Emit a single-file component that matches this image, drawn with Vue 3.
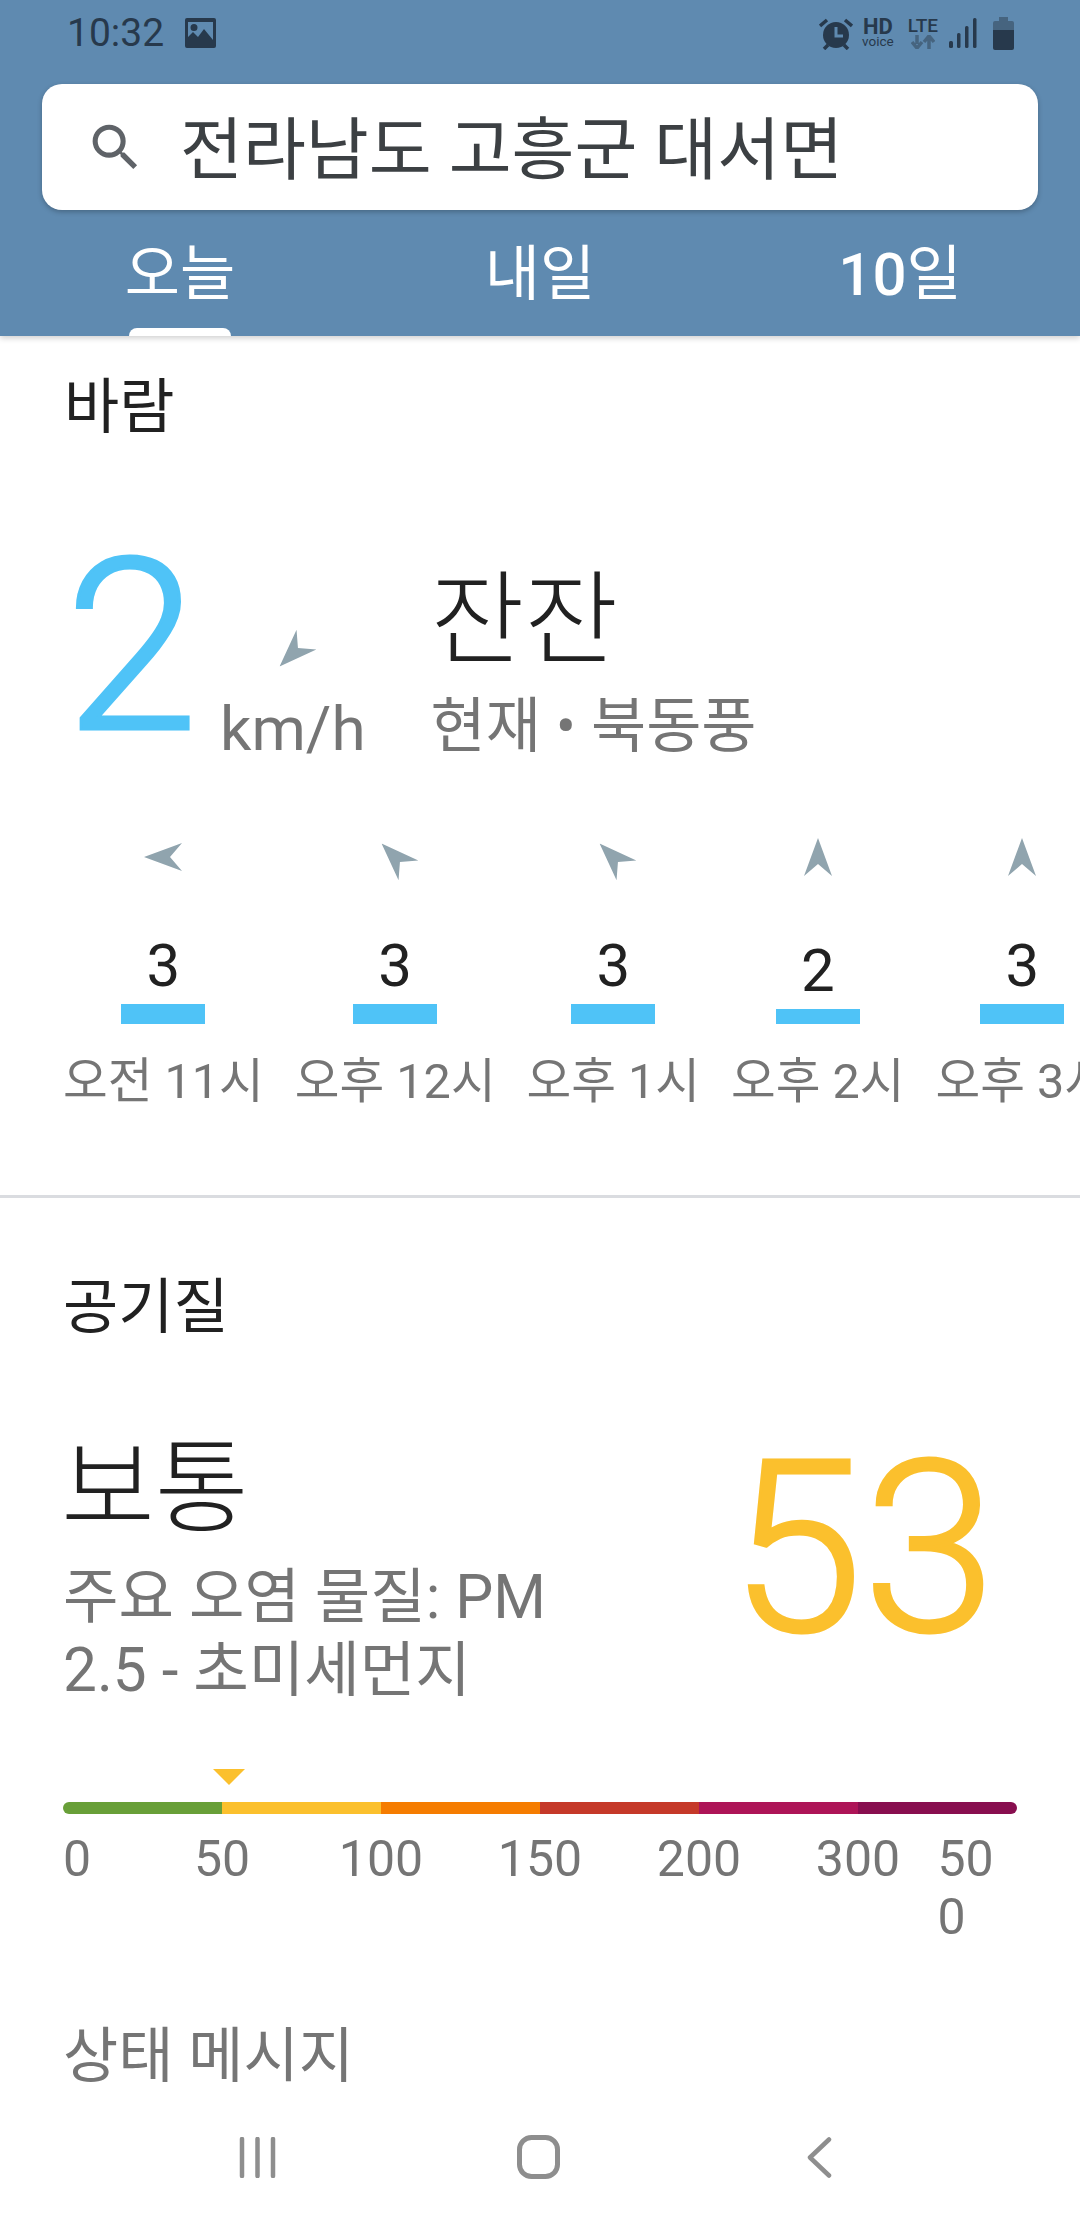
<script setup>
const hours = [
  { label: '오전 11시', value: 3, rot: -90 },
  { label: '오후 12시', value: 3, rot: -45 },
  { label: '오후 1시', value: 3, rot: -45 },
  { label: '오후 2시', value: 2, rot: 0 },
  { label: '오후 3시', value: 3, rot: 0 }
]

const segments = ['#689f38', '#fbc02d', '#f57c00', '#c53929', '#ad1457', '#880e4f']
const ticks = ['50', '100', '150', '200', '300']
const aqi = 53
const segWidth = 159

// marker sits over the bar, 0-50 is the first segment
const markerLeft = (aqi / 50) * segWidth - 19
</script>

<template>
  <div class="screen">
    <header class="top">
      <div class="status">
        <div class="status-left">
          <span class="time">10:32</span>
          <svg class="pic" width="31" height="30" viewBox="0 0 31 30">
            <path fill="#27394c" fill-rule="evenodd" d="M2 0h27a2 2 0 0 1 2 2v26a2 2 0 0 1-2 2H2a2 2 0 0 1-2-2V2a2 2 0 0 1 2-2zM3 4v15l5-5 5 5 6-8 9 11V4zM9 6a3.5 3.5 0 1 1 0 7 3.5 3.5 0 0 1 0-7z" />
          </svg>
        </div>
        <div class="status-right">
          <svg width="34" height="33" viewBox="0 0 34 33">
            <circle cx="17" cy="18" r="13" fill="#27394c" />
            <path d="M17 10v9h7" fill="none" stroke="#5f8ab0" stroke-width="3" />
            <path d="M1 9l7-6M33 9l-7-6M5 32l4-4M29 32l-4-4" stroke="#27394c" stroke-width="3.5" fill="none" />
          </svg>
          <div class="hd"><span class="hd-big">HD</span><span class="hd-small">voice</span></div>
          <div class="lte">
            <span class="lte-text">LTE</span>
            <svg width="24" height="14" viewBox="0 0 24 14">
              <path d="M6 0v9M1 7l5 6 5-6M18 14V4M13 7l5-6 5 6" fill="none" stroke="#46647f" stroke-width="3.5" />
            </svg>
          </div>
          <svg class="signal" width="28" height="30" viewBox="0 0 28 30">
            <rect x="0" y="23" width="4" height="7" rx="1.5" fill="#27394c" />
            <rect x="8" y="15" width="3.5" height="15" rx="1.5" fill="#27394c" />
            <rect x="16" y="8" width="3.5" height="22" rx="1.5" fill="#27394c" />
            <rect x="24" y="0" width="3.5" height="30" rx="1.5" fill="#27394c" />
          </svg>
          <svg class="battery" width="21" height="33" viewBox="0 0 21 33">
            <path d="M6 0h9v4h4a2 2 0 0 1 2 2v8H0V6a2 2 0 0 1 2-2h4z" fill="#46647f" />
            <path d="M0 13h21v18a2 2 0 0 1-2 2H2a2 2 0 0 1-2-2z" fill="#27394c" />
          </svg>
        </div>
      </div>

      <div class="search">
        <svg class="search-icon" width="61" height="61" viewBox="0 0 24 24">
          <path fill="#5f6368" d="M15.5 14h-.79l-.28-.27A6.47 6.47 0 0 0 16 9.5 6.5 6.5 0 1 0 9.5 16c1.61 0 3.09-.59 4.23-1.57l.27.28v.79l5 4.99L20.49 19l-4.99-5zm-6 0C7.01 14 5 11.99 5 9.5S7.01 5 9.5 5 14 7.01 14 9.5 11.99 14 9.5 14z" />
        </svg>
        <span class="search-text">전라남도 고흥군 대서면</span>
      </div>

      <nav class="tabs">
        <div class="tab active">오늘</div>
        <div class="tab">내일</div>
        <div class="tab"><span class="tab-num">10</span>일</div>
      </nav>
    </header>

    <main class="content">
      <section class="wind">
        <h2 class="title">바람</h2>
        <div class="hero">
          <div class="speed">2</div>
          <div class="unit">
            <div class="arrow-box">
              <svg class="arrow" width="28" height="38" viewBox="0 0 28 38" style="transform: rotate(-135deg)">
                <path fill="#90a4ae" d="M14 0l14 38-14-12L0 38z" />
              </svg>
            </div>
            <div class="unit-text">km/h</div>
          </div>
          <div class="desc">
            <div class="big-word">잔잔</div>
            <div class="sub">현재 • 북동풍</div>
          </div>
        </div>

        <div class="hourly">
          <div v-for="h in hours" :key="h.label" class="hour">
            <div class="arrow-box">
              <svg class="arrow" width="28" height="38" viewBox="0 0 28 38" :style="{ transform: `rotate(${h.rot}deg)` }">
                <path fill="#90a4ae" d="M14 0l14 38-14-12L0 38z" />
              </svg>
            </div>
            <div class="chart">
              <div class="num">{{ h.value }}</div>
              <div class="bar" :style="{ height: h.value * 5 + 5 + 'px' }"></div>
            </div>
            <div class="hour-label">{{ h.label }}</div>
          </div>
        </div>
      </section>

      <div class="divider"></div>

      <section class="air">
        <h2 class="title">공기질</h2>
        <div class="air-row">
          <div class="air-info">
            <div class="big-word">보통</div>
            <div class="pollutant">주요 오염 물질: PM 2.5 - 초미세먼지</div>
          </div>
          <div class="aqi">{{ aqi }}</div>
        </div>

        <div class="scale">
          <div class="marker" :style="{ left: markerLeft + 'px' }"></div>
          <div class="track">
            <div v-for="c in segments" :key="c" class="seg" :style="{ background: c }"></div>
          </div>
          <div class="ticks">
            <div class="tick first">0</div>
            <div v-for="t in ticks" :key="t" class="tick">{{ t }}</div>
            <div class="tick last">500</div>
          </div>
        </div>

        <div class="message">상태 메시지</div>
      </section>
    </main>

    <footer class="nav">
      <div class="nav-item">
        <svg width="37" height="41" viewBox="0 0 37 41">
          <path d="M3 2v37M18.5 2v37M34 2v37" stroke="#8e8e8e" stroke-width="4.5" stroke-linecap="round" fill="none" />
        </svg>
      </div>
      <div class="nav-item">
        <svg width="43" height="44" viewBox="0 0 43 44">
          <rect x="2.5" y="2.5" width="38" height="39" rx="12" fill="none" stroke="#8e8e8e" stroke-width="5" />
        </svg>
      </div>
      <div class="nav-item">
        <svg width="25" height="41" viewBox="0 0 25 41">
          <path d="M22 2.5L3 20.5l19 18" stroke="#8e8e8e" stroke-width="4.5" stroke-linecap="round" stroke-linejoin="round" fill="none" />
        </svg>
      </div>
    </footer>
  </div>
</template>

<style scoped>
* {
  box-sizing: border-box;
}

.screen {
  display: flex;
  flex-direction: column;
  width: 1080px;
  height: 2220px;
  overflow: hidden;
  background: #fff;
  font-family: Roboto, "Noto Sans CJK KR", sans-serif;
  color: #212121;
}

.top {
  position: relative;
  z-index: 1;
  flex: none;
  height: 336px;
  background: #5f8ab0;
  box-shadow: 0 2px 6px rgba(0, 0, 0, 0.2);
}

.status {
  display: flex;
  justify-content: space-between;
  align-items: center;
  height: 66px;
  padding: 0 66px 0 67px;
}

.status-left,
.status-right {
  display: flex;
  align-items: center;
}

.time {
  font-size: 39px;
  line-height: 46px;
  color: #27394c;
}

.pic {
  margin-left: 21px;
}

.status-right svg {
  flex: none;
}

.hd {
  display: flex;
  flex-direction: column;
  align-items: center;
  margin-left: 9px;
  color: #27394c;
}

.hd-big {
  font-size: 22px;
  line-height: 17px;
  font-weight: 700;
}

.hd-small {
  font-size: 13.5px;
  line-height: 13px;
}

.lte {
  display: flex;
  flex-direction: column;
  align-items: center;
  margin-left: 14px;
  color: #27394c;
}

.lte-text {
  font-size: 19px;
  line-height: 18px;
  font-weight: 500;
}

.signal {
  margin-left: 11px;
}

.battery {
  margin-left: 16px;
}

.search {
  display: flex;
  align-items: center;
  height: 126px;
  margin: 18px 42px 0;
  padding-left: 43px;
  background: #fff;
  border-radius: 20px;
  box-shadow: 0 2px 5px rgba(0, 0, 0, 0.25);
}

.search-text {
  margin: 8px 0 0 34px;
  font-size: 68.4px;
  line-height: 90px;
  color: #3c4043;
}

.tabs {
  display: flex;
  height: 126px;
}

.tab {
  position: relative;
  flex: 1;
  padding-top: 29px;
  text-align: center;
  font-size: 60px;
  line-height: 72px;
  color: #fff;
}

.tab-num {
  font-weight: 500;
}

.tab.active::after {
  content: "";
  position: absolute;
  left: 129px;
  bottom: 0;
  width: 102px;
  height: 8px;
  background: #fff;
  border-radius: 8px 8px 0 0;
}

.content {
  flex: 1;
  min-height: 0;
  overflow: hidden;
  padding-top: 32px;
}

.title {
  margin: 0;
  padding-left: 64px;
  font-size: 60px;
  line-height: 80px;
  font-weight: 400;
}

.air .title {
  padding-left: 63px;
}

.hero {
  display: flex;
  align-items: flex-start;
  margin-top: 99px;
  padding-left: 65px;
}

.speed {
  width: 138px;
  font-size: 240px;
  line-height: 200px;
  font-weight: 300;
  -webkit-text-stroke: 3px #4fc3f7;
  color: #4fc3f7;
}

.unit {
  display: flex;
  flex-direction: column;
  align-items: center;
  margin-left: 17px;
  padding-top: 76px;
}

.arrow-box {
  display: flex;
  justify-content: center;
  align-items: center;
  height: 60px;
}

.unit-text {
  margin-top: 6px;
  font-size: 62px;
  line-height: 80px;
  color: #757575;
}

.desc {
  margin-left: 65px;
  padding-top: 14px;
}

.big-word {
  font-size: 102px;
  line-height: 120px;
  font-weight: 300;
}

.sub {
  margin-top: 6px;
  font-size: 60px;
  line-height: 80px;
  color: #757575;
}

.hourly {
  display: flex;
  gap: 31px;
  margin-top: 58px;
  padding-left: 63px;
}

.hour {
  display: flex;
  flex: none;
  flex-direction: column;
  align-items: center;
}

.chart {
  display: flex;
  flex-direction: column;
  justify-content: flex-end;
  align-items: center;
  height: 137px;
}

.num {
  font-size: 60px;
  line-height: 70px;
  margin-bottom: 3px;
}

.bar {
  width: 84px;
  background: #4fc3f7;
}

.hour-label {
  margin-top: 26px;
  font-size: 48.6px;
  line-height: 64px;
  white-space: nowrap;
  color: #757575;
}

.divider {
  height: 3px;
  margin-top: 81px;
  background: #dadce0;
}

.air {
  margin-top: 70px;
}

.air-row {
  display: flex;
  justify-content: space-between;
  margin-top: 81px;
  padding: 0 84px 0 63px;
}

.air-info {
  width: 520px;
}

.air-info .big-word {
  margin-left: -2px;
}

.pollutant {
  margin-top: 12px;
  font-size: 60.3px;
  line-height: 73px;
  color: #757575;
}

.aqi {
  margin-top: -4px;
  font-size: 240px;
  line-height: 248px;
  font-weight: 300;
  -webkit-text-stroke: 3px #fbc02d;
  color: #fbc02d;
}

.scale {
  position: relative;
  margin: 95px 63px 0;
}

.marker {
  position: absolute;
  top: -33px;
  width: 0;
  height: 0;
  border-left: 16.5px solid transparent;
  border-right: 16.5px solid transparent;
  border-top: 16px solid #fbc02d;
}

.track {
  display: flex;
  height: 12px;
  overflow: hidden;
  border-radius: 6px;
}

.seg {
  flex: 1;
}

.ticks {
  display: flex;
  margin-top: 16px;
}

.tick {
  flex: none;
  width: 159px;
  text-align: center;
  font-size: 50px;
  line-height: 58px;
  color: #757575;
  word-break: break-all;
}

.tick.first {
  width: 79.5px;
  text-align: left;
}

.tick.last {
  width: 79.5px;
  text-align: left;
}

.message {
  margin-top: 71px;
  padding-left: 63px;
  font-size: 60px;
  line-height: 80px;
  color: #757575;
}

.nav {
  display: flex;
  flex: none;
  justify-content: center;
  align-items: center;
  height: 128px;
  padding: 2px 4px 0 0;
  background: #fff;
}

.nav-item {
  display: flex;
  justify-content: center;
  width: 281px;
}
</style>
